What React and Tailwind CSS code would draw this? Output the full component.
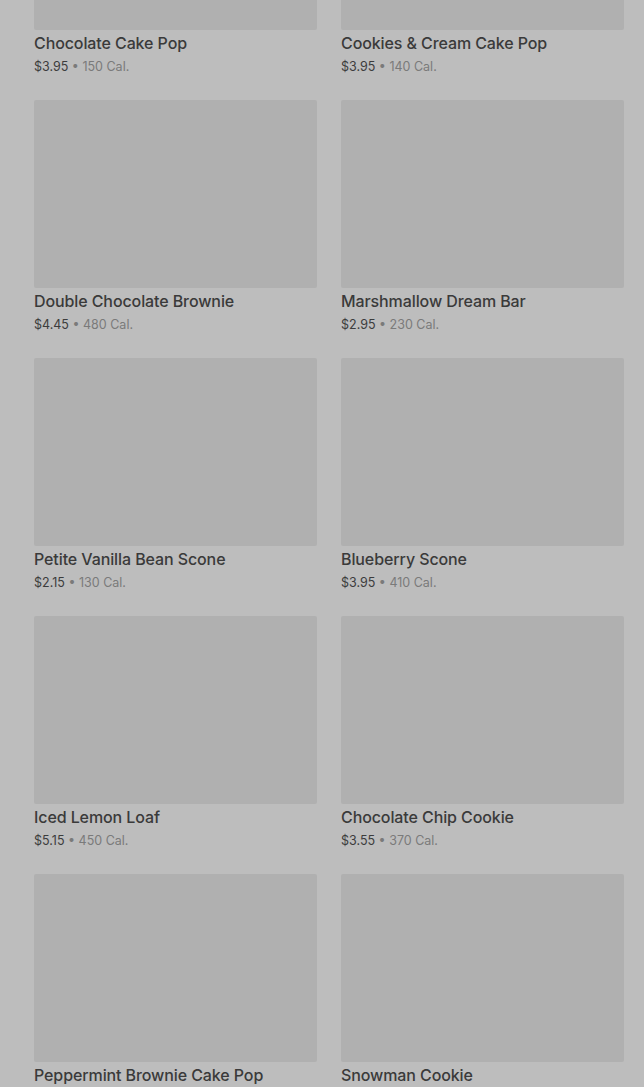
import React from 'react';

const items = [
  { name: 'Chocolate Cake Pop', price: '$3.95', cal: '150 Cal.' },
  { name: 'Cookies & Cream Cake Pop', price: '$3.95', cal: '140 Cal.' },
  { name: 'Double Chocolate Brownie', price: '$4.45', cal: '480 Cal.' },
  { name: 'Marshmallow Dream Bar', price: '$2.95', cal: '230 Cal.' },
  { name: 'Petite Vanilla Bean Scone', price: '$2.15', cal: '130 Cal.' },
  { name: 'Blueberry Scone', price: '$3.95', cal: '410 Cal.' },
  { name: 'Iced Lemon Loaf', price: '$5.15', cal: '450 Cal.' },
  { name: 'Chocolate Chip Cookie', price: '$3.55', cal: '370 Cal.' },
  { name: 'Peppermint Brownie Cake Pop', price: '$3.95', cal: '150 Cal.' },
  { name: 'Snowman Cookie', price: '$3.55', cal: '360 Cal.' },
];

function ProductCard({ item }) {
  return (
    <div className="flex flex-col">
      <div className="h-[188px] bg-[#b0b0b0] rounded-[2px]" />
      <h3 className="mt-[1px] text-[16px] leading-6 font-medium tracking-[-0.1px] text-[#3a3a3a]">{item.name}</h3>
      <p className="text-[12.5px] leading-5 mt-[2px]">
        <span className="text-[#3c3c3c]">{item.price}</span>
        <span className="text-[#7a7a7a]"> • {item.cal}</span>
      </p>
    </div>
  );
}

export default function App() {
  return (
    <div
      className="h-[1087px] overflow-hidden bg-[#bdbdbd]"
      style={{ fontFamily: 'Inter, Roboto, sans-serif' }}
    >
      {/* Product grid, scrolled partway */}
      <div className="mt-[-158px] pl-[34px] pr-[20px] grid grid-cols-2 gap-x-[24px] gap-y-[23px]">
        {items.map((item) => (
          <ProductCard key={item.name} item={item} />
        ))}
      </div>
    </div>
  );
}
